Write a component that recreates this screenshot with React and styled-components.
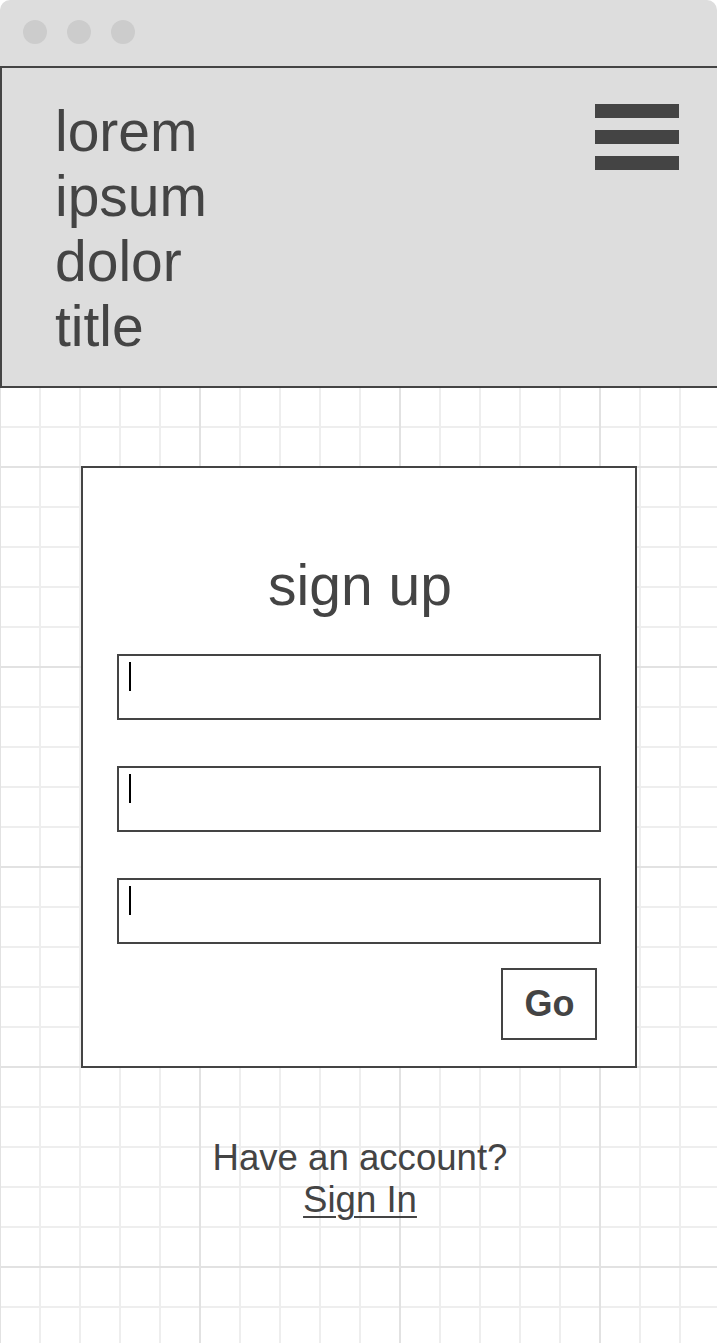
import React from 'react';
import styled, { createGlobalStyle } from 'styled-components';

const GlobalStyle = createGlobalStyle`
  * { box-sizing: border-box; }
  body {
    margin: 0;
    font-family: "Liberation Sans", Arial, sans-serif;
    color: #444;
    background: #fff;
  }
`

const Page = styled.div`
  display: flex;
  flex-direction: column;
  min-height: 1343px;
  overflow: hidden;
`

const TitleBar = styled.div`
  height: 66px;
  flex-shrink: 0;
  display: flex;
  align-items: flex-start;
  gap: 20px;
  padding: 20px 0 0 23px;
  background: #ddd;
  border-radius: 10px 10px 0 0;
`

const Dot = styled.span`
  width: 24px;
  height: 24px;
  border-radius: 50%;
  background: #ccc;
`

const Header = styled.header`
  display: flex;
  justify-content: space-between;
  align-items: flex-start;
  flex-shrink: 0;
  padding: 31px 38px 27px 53px;
  background: #ddd;
  border: 2px solid #444;
  border-right: none;
`

const Brand = styled.div`
  width: 200px;
  font-size: 57px;
  line-height: 65px;
`

const Burger = styled.div`
  display: flex;
  flex-direction: column;
  gap: 12px;
  margin-top: 5px;
`

const Bar = styled.span`
  display: block;
  width: 84px;
  height: 14px;
  background: #444;
`

const Canvas = styled.main`
  flex: 1;
  display: flex;
  flex-direction: column;
  align-items: center;
  padding-top: 78px;
  background-color: #fff;
  background-image:
    linear-gradient(to right, #e2e2e2 0 1px, transparent 1px 199px, #e2e2e2 199px),
    linear-gradient(to bottom, transparent 78px, #e2e2e2 78px 80px, transparent 80px),
    linear-gradient(to right, #eee 0 1px, transparent 1px 39px, #eee 39px),
    linear-gradient(to bottom, transparent 38px, #eee 38px 40px, transparent 40px);
  background-size: 200px 200px, 200px 200px, 40px 40px, 40px 40px;
`

const Card = styled.section`
  width: 556px;
  display: flex;
  flex-direction: column;
  padding: 85px 34px 26px;
  background: #fff;
  border: 2px solid #444;
`

const Heading = styled.h1`
  margin: 0 0 37px;
  padding-left: 3px;
  font-size: 57px;
  font-weight: normal;
  line-height: 64px;
  text-align: center;
`

const Fields = styled.div`
  display: flex;
  flex-direction: column;
  gap: 46px;
`

const Field = styled.div`
  height: 66px;
  padding: 6px 10px;
  background: #fff;
  border: 2px solid #444;

  &::before {
    content: "";
    display: block;
    width: 2px;
    height: 29px;
    background: #000;
  }
`

const Submit = styled.button`
  align-self: flex-end;
  width: 96px;
  height: 72px;
  margin: 24px 4px 0 0;
  padding: 0 0 0 2px;
  font-family: inherit;
  font-size: 36px;
  font-weight: bold;
  color: #444;
  background: #fff;
  border: 2px solid #444;
  cursor: pointer;
`

const Footer = styled.p`
  margin: 69px 0 0;
  padding-left: 3px;
  font-size: 36.6px;
  line-height: 42px;
  text-align: center;
`

const SignIn = styled.a`
  color: #444;
  text-decoration: underline;
  text-decoration-thickness: 2px;
  text-underline-offset: 4px;
  cursor: pointer;
`

const App = () => {
  return (
    <>
      <GlobalStyle />
      <Page>
        <TitleBar>
          <Dot />
          <Dot />
          <Dot />
        </TitleBar>
        <Header>
          <Brand>lorem ipsum dolor title</Brand>
          <Burger>
            <Bar />
            <Bar />
            <Bar />
          </Burger>
        </Header>
        <Canvas>
          <Card>
            <Heading>sign up</Heading>
            <Fields>
              <Field />
              <Field />
              <Field />
            </Fields>
            <Submit>Go</Submit>
          </Card>
          <Footer>
            Have an account?<br />
            <SignIn>Sign In</SignIn>
          </Footer>
        </Canvas>
      </Page>
    </>
  );
};

export default App;
